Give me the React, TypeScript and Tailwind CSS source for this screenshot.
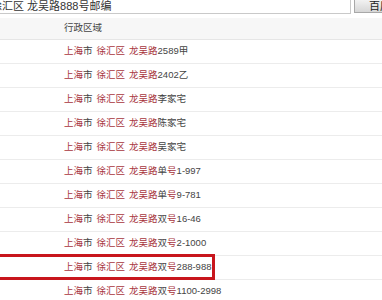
const rows = [
    { rest: '2589甲' },
    { rest: '2402乙' },
    { rest: '李家宅' },
    { rest: '陈家宅' },
    { rest: '吴家宅' },
    { pre: '单', rest: '1-997' },
    { pre: '单', rest: '9-781' },
    { pre: '双', rest: '16-46' },
    { pre: '双', rest: '2-1000' },
    { pre: '双', rest: '288-988', marked: true },
    { pre: '双', rest: '1100-2998' },
];

const red = 'text-[#a8353d]';

function Row({ pre, rest, marked }: { pre?: string; rest: string; marked?: boolean }) {
    return (
        <div className="relative flex h-[24px] items-center border-b border-[#ececec] pl-[64px] text-[9.5px] text-[#444]">
            <span className={red}>上海</span>
            <span>市</span>
            <span className="w-[4px]" />
            <span className={red}>徐汇区</span>
            <span className="w-[4px]" />
            <span className={red}>龙吴路</span>
            {pre && (
                <>
                    <span>{pre}</span>
                    <span className={red}>号</span>
                </>
            )}
            <span>{rest}</span>
            {marked && (
                <div className="absolute -top-[2px] -bottom-[1px] -left-[10px] w-[225px] border-[3px] border-[#c8161d]" />
            )}
        </div>
    );
}

export default function App() {
    return (
        <div
            className="h-[300px] w-[382px] overflow-hidden bg-white"
            style={{ fontFamily: '"Liberation Sans", "Noto Sans CJK SC", sans-serif' }}
        >
            {/* search bar */}
            <div className="flex h-[14px]">
                <div className="flex w-[351px] items-start overflow-hidden border-r border-b border-[#c9c9c9]">
                    <span className="-ml-[9px] whitespace-nowrap text-[11px] leading-[12px] text-[#333]">
                        徐汇区 龙吴路888号邮编
                    </span>
                </div>
                <div className="ml-[3px] flex h-[13px] flex-1 items-start overflow-hidden border-l border-b border-[#a8a8a8] bg-gradient-to-b from-[#f2f2f2] to-[#d6d6d6] pl-[14px]">
                    <span className="whitespace-nowrap text-[11px] leading-[12px] text-[#222]">百度一下</span>
                </div>
            </div>

            {/* table */}
            <div className="mt-[4px]">
                <div className="flex h-[22px] items-center border-b border-[#e6e6e6] bg-[#f7f7f7] pl-[64px] text-[9.5px] text-[#444]">
                    行政区域
                </div>
                {rows.map((r, i) => (
                    <Row key={i} {...r} />
                ))}
            </div>
        </div>
    );
}
